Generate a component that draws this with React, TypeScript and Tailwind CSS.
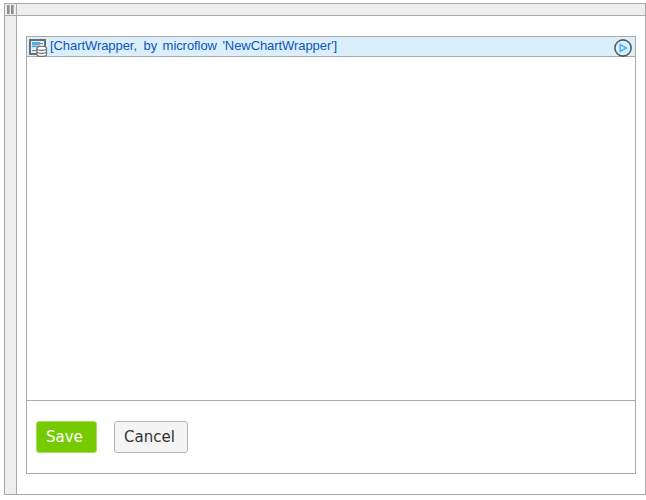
function DataViewIcon() {
  return (
    <svg width="20" height="20" viewBox="0 0 20 20" fill="none" className="block shrink-0">
      <rect x="2" y="3" width="15" height="14" stroke="#6a6e72" strokeWidth="2" />
      <path d="M4 6h8" stroke="#48b0f7" strokeWidth="2" />
      <path d="M4 9.5h9" stroke="#48b0f7" strokeWidth="1.4" />
      <path d="M12 6.5h3M4 7.8h8M4 13.5h5" stroke="#7b8085" strokeWidth="1" />
      <path d="M9 11.5c0-3 9.5-3 9.5 0v6c0 2.6-9.5 2.6-9.5 0z" fill="#fff" stroke="#6a6e72" strokeWidth="1.2" />
      <path d="M9 11.8c0 2 9.5 2 9.5 0M9 14.8c0 2 9.5 2 9.5 0" stroke="#6a6e72" strokeWidth="1.2" />
    </svg>
  );
}

function PlayIcon() {
  return (
    <svg width="18" height="18" viewBox="0 0 18 18" fill="none" className="block shrink-0">
      <circle cx="9" cy="9" r="8.1" stroke="#5a5d60" strokeWidth="1.6" />
      <path d="M6.2 5.6v6.8L12.4 9z" stroke="#48b0f7" strokeWidth="1.5" />
    </svg>
  );
}

export default function App() {
  return (
    <div className="h-[500px] w-[646px] bg-white pl-1 pt-[3px]">
      <div className="grid h-[492px] w-[642px] grid-cols-[12px_1fr] grid-rows-[12px_1fr] border border-[#a9a9a9]">
        <div className="flex items-center justify-center gap-px border-r border-b border-[#a9a9a9] bg-[#eee]">
          <span className="h-[9px] w-[3px] border-r border-[#b4b4b4] bg-[#8c8c8c]" />
          <span className="h-[9px] w-[3px] border-r border-[#b4b4b4] bg-[#8c8c8c]" />
        </div>
        <div className="border-b border-[#a9a9a9] bg-[#eee]" />
        <div className="border-r border-[#a9a9a9] bg-[#eee]" />
        <main className="px-[9px] pt-5 pb-5">
          <section className="flex h-full flex-col border border-[#a9a9a9]">
            <header className="flex h-5 shrink-0 items-start border-b border-[#a9a9a9] bg-[#daeefc] pl-px pr-[3px]">
              <DataViewIcon />
              <span className="ml-[2px] mt-px grow whitespace-nowrap font-['Liberation_Sans',Arial,sans-serif] text-[13px] leading-4 tracking-[-0.07px] text-[#0b55bd] [word-spacing:2px]">
                [ChartWrapper,<span className="ml-px"> </span>by microflow 'NewChartWrapper']
              </span>
              <div className="mt-0.5">
                <PlayIcon />
              </div>
            </header>
            <div className="grow" />
            <footer className="flex h-[73px] shrink-0 items-start gap-[17px] border-t border-[#a9a9a9] pl-[9px] pt-5 font-['DejaVu_Sans',Verdana,sans-serif] text-[15px]">
              <button className="flex h-8 w-[61px] items-center rounded-[3px] border border-[#a5df58] bg-[#76ca02] pl-[9px] text-white">
                Save
              </button>
              <button className="flex h-8 w-[74px] items-center rounded-[3px] border border-[#b5b5b5] bg-[#f4f4f4] pl-[9px] text-[#333]">
                Cancel
              </button>
            </footer>
          </section>
        </main>
      </div>
    </div>
  );
}
